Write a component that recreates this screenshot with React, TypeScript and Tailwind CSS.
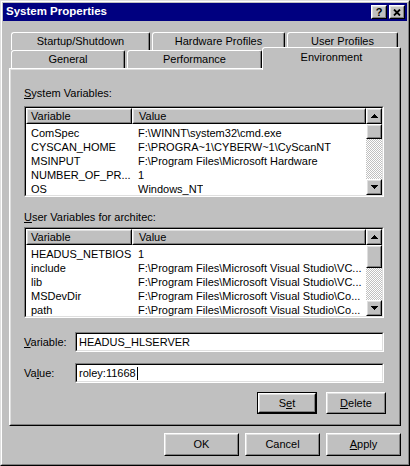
import type { ReactNode } from 'react'

const sysRows = [
  ['ComSpec', 'F:\\WINNT\\system32\\cmd.exe'],
  ['CYSCAN_HOME', 'F:\\PROGRA~1\\CYBERW~1\\CyScanNT'],
  ['MSINPUT', 'F:\\Program Files\\Microsoft Hardware'],
  ['NUMBER_OF_PR...', '1'],
  ['OS', 'Windows_NT'],
]

const userRows = [
  ['HEADUS_NETBIOS', '1'],
  ['include', 'F:\\Program Files\\Microsoft Visual Studio\\VC...'],
  ['lib', 'F:\\Program Files\\Microsoft Visual Studio\\VC...'],
  ['MSDevDir', 'F:\\Program Files\\Microsoft Visual Studio\\Co...'],
  ['path', 'F:\\Program Files\\Microsoft Visual Studio\\Co...'],
]

function Raised({ className = '', inner = 'justify-center', children }: { className?: string; inner?: string; children?: ReactNode }) {
  return (
    <div className={`border border-t-white border-l-white border-r-black border-b-black bg-[#c0c0c0] ${className}`}>
      <div className={`flex h-full w-full items-center border border-t-[#dfdfdf] border-l-[#dfdfdf] border-r-[#808080] border-b-[#808080] ${inner}`}>
        {children}
      </div>
    </div>
  )
}

function Sunken({ className = '', children }: { className?: string; children?: ReactNode }) {
  return (
    <div className={`border border-t-[#808080] border-l-[#808080] border-r-white border-b-white ${className}`}>
      <div className="flex h-full w-full border border-t-black border-l-black border-r-[#dfdfdf] border-b-[#dfdfdf] bg-white">
        {children}
      </div>
    </div>
  )
}

function Arrow({ down = false }: { down?: boolean }) {
  return (
    <svg width="7" height="4" viewBox="0 0 7 4" shapeRendering="crispEdges" className={down ? 'rotate-180' : ''}>
      <path d="M3 0h1v1h-1z M2 1h3v1h-3z M1 2h5v1h-5z M0 3h7v1h-7z" fill="black" />
    </svg>
  )
}

function ScrollBar({ thumb }: { thumb: string }) {
  return (
    <div className="flex w-[16px] shrink-0 flex-col">
      <Raised className="h-[16px] w-[16px] shrink-0">
        <Arrow />
      </Raised>
      <Raised className={`w-[16px] shrink-0 ${thumb}`} />
      <div className="flex-1 bg-[image:repeating-conic-gradient(#c0c0c0_0%_25%,#ffffff_0%_50%)] bg-[length:2px_2px]" />
      <Raised className="h-[16px] w-[16px] shrink-0">
        <Arrow down />
      </Raised>
    </div>
  )
}

function ListView({ rows, thumb }: { rows: string[][]; thumb: string }) {
  return (
    <Sunken className="h-[91px] w-[360px]">
      <div className="flex min-w-0 flex-1 flex-col overflow-hidden">
        <div className="flex h-[16px] shrink-0">
          <Raised className="h-full w-[106px] shrink-0" inner="justify-start pl-[3px]">Variable</Raised>
          <Raised className="h-full flex-1" inner="justify-start pl-[5px]">Value</Raised>
        </div>
        <div className="pt-[2px]">
          {rows.map(([k, v]) => (
            <div key={k} className="flex h-[14px] items-center whitespace-nowrap">
              <div className="w-[106px] shrink-0 pl-[5px]">{k}</div>
              <div className="overflow-hidden pl-[6px]">{v}</div>
            </div>
          ))}
        </div>
      </div>
      <ScrollBar thumb={thumb} />
    </Sunken>
  )
}

function Tab({ label, className, selected = false }: { label: string; className: string; selected?: boolean }) {
  return (
    <div
      className={`relative flex shrink-0 items-center justify-center rounded-tl-[3px] rounded-tr-[2px] border-t border-l border-r border-t-white border-l-white border-r-black bg-[#c0c0c0] shadow-[inset_-1px_0_0_#808080] ${
        selected ? 'z-10 -mt-[3px] h-[23px] pb-[4px]' : 'h-[18px]'
      } ${className}`}
    >
      {label}
    </div>
  )
}

function Button({ className = '', children, isDefault = false }: { className?: string; children: ReactNode; isDefault?: boolean }) {
  if (isDefault) {
    return (
      <div className={`border border-black ${className}`}>
        <Raised className="h-full w-full">{children}</Raised>
      </div>
    )
  }
  return <Raised className={className}>{children}</Raised>
}

export default function App() {
  return (
    <div className="h-[466px] w-[410px] border border-t-[#dfdfdf] border-l-[#dfdfdf] border-r-black border-b-black bg-[#c0c0c0] font-['Liberation_Sans',Arial,sans-serif] text-[11px] leading-none text-black">
      <div className="flex h-full flex-col border border-t-white border-l-white border-r-[#808080] border-b-[#808080] p-px">
        {/* title bar */}
        <div className="flex h-[18px] shrink-0 items-center justify-between bg-[#000080] pl-[3px] pr-[2px]">
          <span className="text-[11.5px] font-bold text-white">System Properties</span>
          <div className="flex gap-[2px]">
            <Raised className="h-[14px] w-[16px]">
              <span className="text-[11px] font-bold">?</span>
            </Raised>
            <Raised className="h-[14px] w-[16px]">
              <svg width="8" height="7" viewBox="0 0 8 7">
                <path d="M1 0.5 L7 6.5 M7 0.5 L1 6.5" stroke="black" strokeWidth="1.8" />
              </svg>
            </Raised>
          </div>
        </div>

        {/* tabs */}
        <div className="mt-[11px] flex h-[18px] pl-[8px]">
          <Tab label="Startup/Shutdown" className="w-[139px]" />
          <Tab label="Hardware Profiles" className="ml-[2px] w-[133px]" />
          <Tab label="User Profiles" className="ml-[2px] w-[111px]" />
        </div>
        <div className="flex h-[18px] pl-[8px]">
          <Tab label="General" className="w-[114px]" />
          <Tab label="Performance" className="ml-[2px] w-[135px]" />
          <Tab label="Environment" className="w-[139px]" selected />
        </div>

        {/* panel */}
        <div className="ml-[6px] h-[358px] w-[392px] shrink-0 border border-t-white border-l-white border-r-black border-b-black">
          <div className="flex h-full flex-col border border-t-[#dfdfdf] border-l-[#dfdfdf] border-r-[#808080] border-b-[#808080] px-[13px] pt-[16px]">
            <div className="flex h-[14px] items-center">
              <span className="underline underline-offset-[1px]">S</span>ystem Variables:
            </div>
            <div className="mt-[6px]">
              <ListView rows={sysRows} thumb="h-[15px]" />
            </div>
            <div className="mt-[13px] flex h-[14px] items-center">
              <span className="underline underline-offset-[1px]">U</span>ser Variables for architec:
            </div>
            <div className="mt-[3px]">
              <ListView rows={userRows} thumb="h-[23px]" />
            </div>

            <div className="mt-[14px] flex h-[20px] items-center">
              <div className="w-[51px]">
                <span className="underline underline-offset-[1px]">V</span>ariable:
              </div>
              <Sunken className="h-[20px] w-[309px]">
                <div className="flex items-center pl-[2px]">HEADUS_HLSERVER</div>
              </Sunken>
            </div>
            <div className="mt-[11px] flex h-[20px] items-center">
              <div className="w-[51px]">
                Va<span className="underline underline-offset-[1px]">l</span>ue:
              </div>
              <Sunken className="h-[20px] w-[309px]">
                <div className="flex items-center pl-[2px]">
                  roley:11668
                  <span className="ml-px h-[13px] w-px bg-black" />
                </div>
              </Sunken>
            </div>

            <div className="mt-[9px] flex justify-end gap-[9px]">
              <Button className="h-[22px] w-[60px]" isDefault>
                S<span className="underline underline-offset-[1px]">e</span>t
              </Button>
              <Button className="h-[22px] w-[60px]">
                <span className="underline underline-offset-[1px]">D</span>elete
              </Button>
            </div>
          </div>
        </div>

        {/* dialog buttons */}
        <div className="mt-[7px] flex justify-end gap-[6px] pr-[6px]">
          <Button className="h-[23px] w-[75px]">OK</Button>
          <Button className="h-[23px] w-[75px]">Cancel</Button>
          <Button className="h-[23px] w-[75px]">
            <span className="underline underline-offset-[1px]">A</span>pply
          </Button>
        </div>
      </div>
    </div>
  )
}
